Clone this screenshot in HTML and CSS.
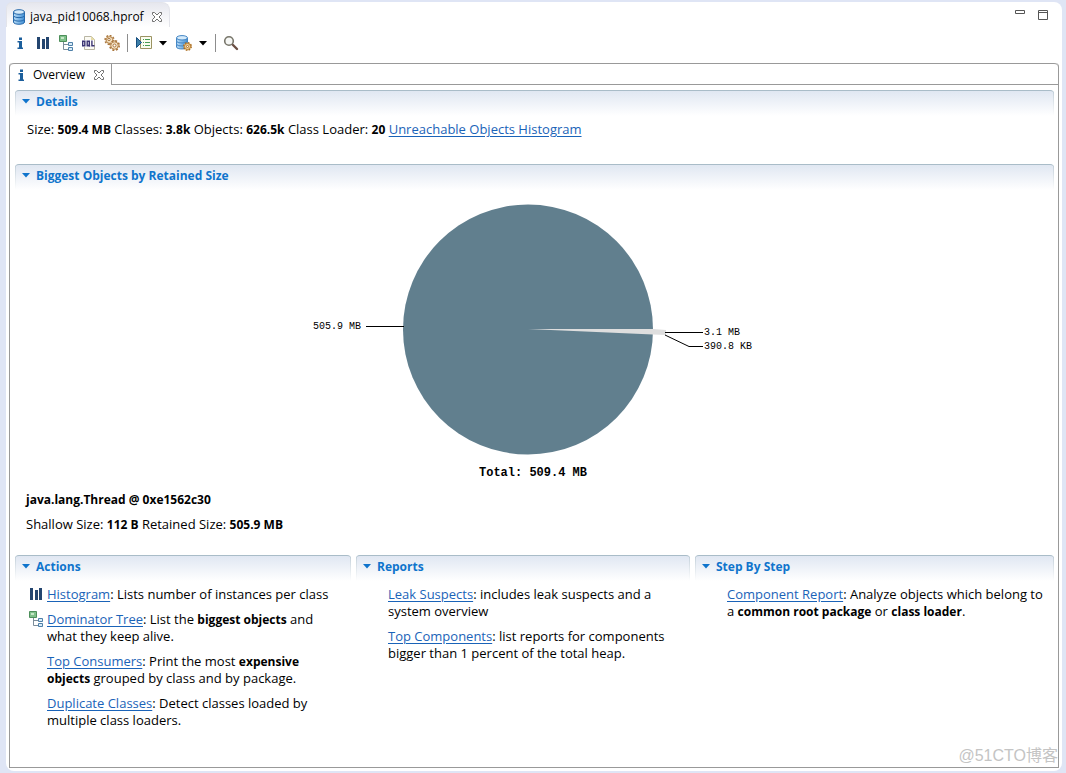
FILE: index.html
```html
<!DOCTYPE html>
<html lang="en">
<head>
<meta charset="utf-8">
<title>java_pid10068.hprof</title>
<link rel="stylesheet" href="styles.css">
</head>
<body>
<svg class="defs" aria-hidden="true">
  <defs>
    <linearGradient id="blue" x1="0" x2="1" y1="0" y2="0"><stop offset="0" stop-color="#b9dcf6"/><stop offset="1" stop-color="#3f8fd6"/></linearGradient>
    <symbol id="i-info" viewBox="0 0 16 16"><path fill="#1c5f9c" d="M7 2.500h3V5H7zM5.500 6H10v6.500h1V14H5.500v-1.500H7v-5H5.500z"/></symbol>
    <symbol id="i-bars" viewBox="0 0 16 16"><path fill="#23456f" d="M2 2h3v12H2zM7 4h3v10H7zM11 2h3v12h-3z"/></symbol>
    <symbol id="i-tree" viewBox="0 0 16 16"><path fill="#7fc08a" stroke="#4d8f5a" d="M1.500.5h7v6h-7z"/><path fill="#c6e7c6" d="M3 2h3v2H3z"/><path fill="none" stroke="#7c8d9b" d="M5.500 7v7.500H10M5.500 9.500H10"/><path fill="#d9ecf8" stroke="#4f80a8" d="M10.500 7.500h4v3h-4zM10.500 12.500h4v3h-4z"/></symbol>
    <symbol id="i-oql" viewBox="0 0 16 16"><path fill="#fbfaf3" stroke="#b9b6a4" d="M3.500 1.500h7l3 3v10h-10z"/><path fill="#e5dba8" d="M10 1v4h4z"/><path fill="#fff" d="M1 5h12v7H1z"/><g fill="none" stroke="#3c3573" stroke-width="1.400"><path d="M1.700 6.200h2.100v4.600H1.700zM6.200 6.200h2.100v4.600H6.200zM7.500 9.500l1.500 2M10.900 5.500v5.300H13.500"/></g></symbol>
    <symbol id="i-gears" viewBox="0 0 16 16"><g fill="#f5e3c4" stroke="#a9763e"><circle cx="5.500" cy="5" r="4.400" stroke-width="1.600" stroke-dasharray="1.800 1.600"/><circle cx="5.500" cy="5" r="3.300" stroke-width=".8"/><circle cx="10.500" cy="10.500" r="4.700" stroke-width="1.600" stroke-dasharray="2 1.700"/><circle cx="10.500" cy="10.500" r="3.700" stroke-width=".8"/></g><circle cx="10.500" cy="10.500" r="1.500" fill="#fff" stroke="#a9763e"/><circle cx="5" cy="4.500" r="1.200" fill="#fff" stroke="#a9763e"/></symbol>
    <symbol id="i-db" viewBox="0 0 16 16"><g fill="url(#blue)" stroke="#2568aa"><path d="M2.500 10v3c0 3 11 3 11 0v-3"/><path d="M2.500 6v4c0 2.800 11 2.800 11 0V6"/><path d="M2.500 3v3.500c0 2.800 11 2.800 11 0V3"/><ellipse cx="8" cy="3" rx="5.500" ry="2.300" fill="#d4eafa"/></g></symbol>
    <symbol id="i-run" viewBox="0 0 16 16"><path fill="#fbfdf0" stroke="#9b9362" d="M4.500 1.500h11v12h-11z"/><path stroke="#4a9d55" d="M7 4.500h1M9 4.500h5M7 7.500h1M9 7.500h5M7 10.500h1M9 10.500h5"/><path fill="#3d7ea8" stroke="#174f80" d="M.5 2.500v10l5-5z"/></symbol>
    <symbol id="i-dbgear" viewBox="0 0 16 16"><g fill="url(#blue)" stroke="#4385c4"><path d="M.5 9v3c0 2.600 11 2.600 11 0V9"/><path d="M.5 6v3c0 2.600 11 2.600 11 0V6"/><path d="M.5 3v3c0 2.600 11 2.600 11 0V3"/><ellipse cx="6" cy="2.800" rx="5.500" ry="2.200" fill="#d4eafa"/></g><circle cx="11.500" cy="11.500" r="3.700" fill="#f2cf86" stroke="#a8691f" stroke-width="1.500" stroke-dasharray="1.600 1.300"/><circle cx="11.500" cy="11.500" r="2.900" fill="#f9e2b0" stroke="#a8691f" stroke-width=".8"/><circle cx="11.500" cy="11.500" r="1.100" fill="#fff" stroke="#a8691f"/></symbol>
    <symbol id="i-search" viewBox="0 0 16 16"><circle cx="6" cy="6" r="4.300" fill="#f6f7f5" stroke="#77756a" stroke-width="1.600"/><path stroke="#6b4f43" stroke-width="2.400" stroke-linecap="round" d="M10 10l4 4"/></symbol>
    <symbol id="i-close" viewBox="0 0 12 12"><path fill="#fff" stroke="#707070" d="M1.500 1.500h2L6 4l2.500-2.500h2v2L8 6l2.500 2.500v2h-2L6 8l-2.500 2.500h-2v-2L4 6 1.500 3.500z"/></symbol>
    <symbol id="i-down" viewBox="0 0 8 5"><path fill="currentColor" d="M0 0h8L4 4.500z"/></symbol>
  </defs>
</svg>

<main class="window">
  <header class="editor-head">
    <div class="editor-tab">
      <svg class="icon"><use href="#i-db"/></svg>
      <span>java_pid10068.hprof</span>
      <button class="close" aria-label="Close editor"><svg><use href="#i-close"/></svg></button>
    </div>
    <div class="window-buttons">
      <button aria-label="Minimize"><svg viewBox="0 0 12 12"><path fill="#fff" stroke="#555" d="M1.500 1.500h9v3h-9z"/></svg></button>
      <button aria-label="Maximize"><svg viewBox="0 0 12 12"><path fill="#fff" stroke="#555" d="M1.500 1.500h9v9h-9zM1.500 3.500h9"/></svg></button>
    </div>
  </header>

  <nav class="toolbar" aria-label="Heap dump tools">
    <button aria-label="Overview"><svg class="icon"><use href="#i-info"/></svg></button>
    <button aria-label="Histogram"><svg class="icon"><use href="#i-bars"/></svg></button>
    <button aria-label="Dominator tree"><svg class="icon"><use href="#i-tree"/></svg></button>
    <button aria-label="OQL"><svg class="icon"><use href="#i-oql"/></svg></button>
    <button aria-label="Thread overview"><svg class="icon"><use href="#i-gears"/></svg></button>
    <span class="divider"></span>
    <button class="with-menu" aria-label="Run report"><svg class="icon"><use href="#i-run"/></svg><svg class="caret"><use href="#i-down"/></svg></button>
    <button class="with-menu" aria-label="Query browser"><svg class="icon"><use href="#i-dbgear"/></svg><svg class="caret"><use href="#i-down"/></svg></button>
    <span class="divider"></span>
    <button aria-label="Find"><svg class="icon"><use href="#i-search"/></svg></button>
  </nav>

  <div class="frame">
    <div class="tabs">
      <div class="tab">
        <svg class="icon"><use href="#i-info"/></svg>
        <span>Overview</span>
        <button class="close" aria-label="Close overview"><svg><use href="#i-close"/></svg></button>
      </div>
      <div class="tabs-rest"></div>
    </div>

    <div class="page">
      <section class="section">
        <h2><button><svg class="caret"><use href="#i-down"/></svg>Details</button></h2>
        <p class="details">Size: <b>509.4 MB</b> Classes: <b>3.8k</b> Objects: <b>626.5k</b> Class Loader: <b>20</b> <a href="#">Unreachable Objects Histogram</a></p>
      </section>

      <section class="section biggest">
        <h2><button><svg class="caret"><use href="#i-down"/></svg>Biggest Objects by Retained Size</button></h2>
        <svg class="chart" viewBox="308 195 453 288" role="img" aria-label="Retained size by object">
          <circle cx="528" cy="329.500" r="125" fill="#617f8e"/>
          <path fill="#dedede" d="M528 329l125 0 13 1v5l-13-0.500z"/>
          <path fill="none" stroke="#000" d="M366 326.500h38M665 332.500h38M665 335l24 11.500h14"/>
          <text x="313" y="329">505.9 MB</text>
          <text x="704" y="335">3.1 MB</text>
          <text x="704" y="349">390.8 KB</text>
          <text class="total" x="533" y="476">Total: 509.4 MB</text>
        </svg>
        <div class="selected">
          <p><b>java.lang.Thread @ 0xe1562c30</b></p>
          <p>Shallow Size: <b>112 B</b> Retained Size: <b>505.9 MB</b></p>
        </div>
      </section>

      <div class="columns">
        <section class="section">
          <h2><button><svg class="caret"><use href="#i-down"/></svg>Actions</button></h2>
          <ul>
            <li><svg class="icon"><use href="#i-bars"/></svg><p><a href="#">Histogram</a>: Lists number of instances per class</p></li>
            <li><svg class="icon"><use href="#i-tree"/></svg><p><a href="#">Dominator Tree</a>: List the <b>biggest objects</b> and what they keep alive.</p></li>
            <li><p><a href="#">Top Consumers</a>: Print the most <b>expensive objects</b> grouped by class and by package.</p></li>
            <li><p><a href="#">Duplicate Classes</a>: Detect classes loaded by multiple class loaders.</p></li>
          </ul>
        </section>
        <section class="section">
          <h2><button><svg class="caret"><use href="#i-down"/></svg>Reports</button></h2>
          <ul>
            <li><p><a href="#">Leak Suspects</a>: includes leak suspects and a system overview</p></li>
            <li><p><a href="#">Top Components</a>: list reports for components bigger than 1 percent of the total heap.</p></li>
          </ul>
        </section>
        <section class="section steps">
          <h2><button><svg class="caret"><use href="#i-down"/></svg>Step By Step</button></h2>
          <ul>
            <li><p><a href="#">Component Report</a>: Analyze objects which belong to a <b>common root package</b> or <b>class loader</b>.</p></li>
          </ul>
        </section>
      </div>
    </div>
  </div>
  <div class="watermark">@51CTO博客</div>
</main>
</body>
</html>
```
FILE: styles.css
```css
* { box-sizing: border-box; }
body {
  margin: 0;
  min-height: 100vh;
  display: flex;
  padding: 2px 4px 2px 2px;
  background: #dfe5f5;
  font: 13px/17px "Open Sans", "Noto Sans", "Noto Sans CJK SC", sans-serif;
  color: #000;
}
p, h2, ul { margin: 0; padding: 0; }
ul { list-style: none; }
b { font-size: 12px; }
a { color: #1a63b8; text-underline-offset: 2px; }
button {
  padding: 0;
  border: 0;
  background: none;
  color: inherit;
  font: inherit;
  display: flex;
  align-items: center;
}
svg { display: block; flex: none; }
.defs { position: absolute; width: 0; height: 0; }
.icon { width: 16px; height: 16px; }
.caret { width: 8px; height: 5px; }

.window {
  position: relative;
  flex: 1;
  min-width: 0;
  display: flex;
  flex-direction: column;
  margin-left: 4px;
  padding: 0 3px 3px;
  background: #fff;
  border-radius: 8px;
}

.editor-head {
  display: flex;
  justify-content: space-between;
  align-items: flex-start;
  height: 26px;
  margin-left: -3px;
}
.editor-tab {
  display: flex;
  align-items: center;
  height: 25px;
  padding: 3px 6px 0 4px;
  gap: 3px;
  border: 1px solid #e3e4ea;
  border-bottom: 0;
  border-radius: 6px 8px 0 0;
  background: linear-gradient(#e6e7ee, #fff);
  font-size: 12px;
}
.close { margin-left: 4px; }
.close svg { width: 12px; height: 12px; }
.window-buttons { display: flex; gap: 11px; padding: 7px 10px 0 0; }
.window-buttons svg { width: 12px; height: 12px; }

.toolbar {
  display: flex;
  align-items: center;
  gap: 7px;
  height: 30px;
  padding-left: 3px;
}
.divider { width: 1px; height: 18px; background: #8d8d8d; }
.with-menu { gap: 7px; padding: 0 1px; }

.frame {
  flex: 1;
  margin-top: 5px;
  border: 1px solid #999;
  border-top: 0;
  border-radius: 4px 4px 0 0;
}
.tabs { display: flex; height: 22px; }
.tab {
  display: flex;
  align-items: center;
  gap: 4px;
  padding: 0 6px 0 3px;
  border: solid #999;
  border-width: 1px 1px 0 0;
  border-top-left-radius: 4px;
  font-size: 12px;
}
.tabs-rest {
  flex: 1;
  border: solid #999;
  border-width: 1px 0;
  border-top-right-radius: 4px;
}

.page { padding: 5px 4px 0 5px; }
.section h2 {
  height: 26px;
  margin-bottom: 5px;
  padding: 2px 7px;
  border-top: 1px solid #a9bcc8;
  border-radius: 4px 4px 0 0;
  background:
    linear-gradient(#c3d0da, #fff) left / 1px 100% no-repeat,
    linear-gradient(#c3d0da, #fff) right / 1px 100% no-repeat,
    linear-gradient(#e0e7f2, #fff);
  color: #0f74cc;
  font-size: 12px;
  line-height: 17px;
}
.section h2 button { gap: 6px; }
.details { padding: 0 12px; margin-bottom: 26px; }
.chart { width: 453px; height: 288px; margin: 0 auto 8px; }
.chart text { font: 10px "Liberation Mono", monospace; }
.chart .total { font-size: 12px; font-weight: bold; text-anchor: middle; }
.selected { display: grid; gap: 8px; padding: 0 11px; margin-bottom: 22px; }

.columns {
  display: grid;
  grid-template-columns: 336fr 334fr 359fr;
  gap: 5px;
}
.columns ul { display: grid; gap: 8px; padding: 0 8px 24px 13px; }
.columns .steps ul { padding-right: 4px; }
.columns li {
  display: grid;
  grid-template-columns: 16px 1fr;
  column-gap: 3px;
}
.columns li p { grid-column: 2; }

.watermark {
  position: absolute;
  right: 4px;
  bottom: 4px;
  color: #c4c4c4;
  font: 16px/22px "Liberation Sans", "Noto Sans CJK SC", sans-serif;
}
```
